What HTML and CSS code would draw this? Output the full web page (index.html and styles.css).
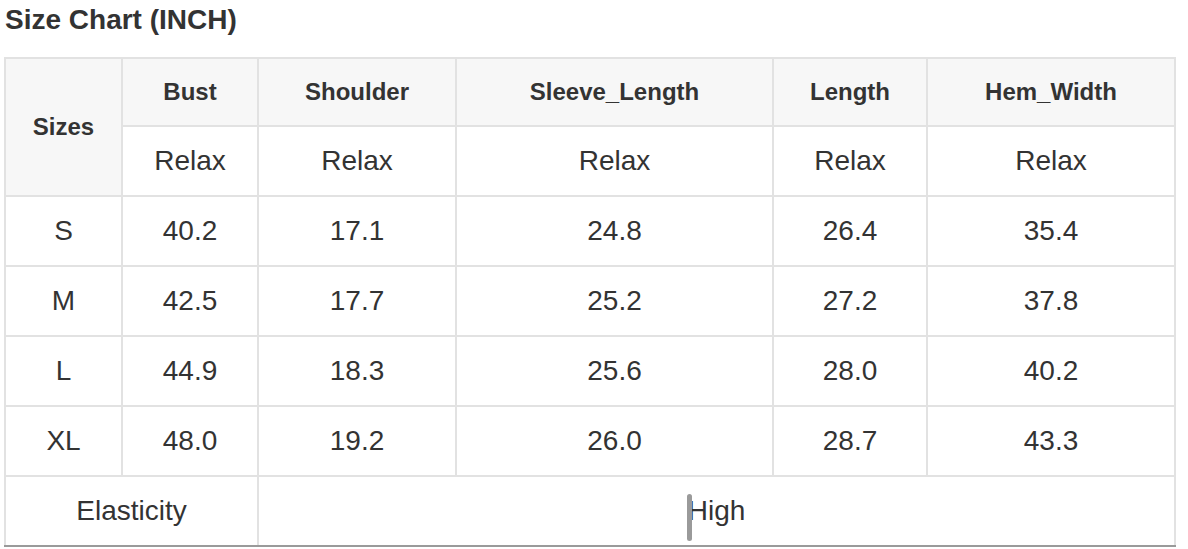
FILE: index.html
```html
<!DOCTYPE html>
<html>
<head>
<meta charset="utf-8">
<link rel="stylesheet" href="styles.css">
</head>
<body>
<h2 class="title">Size Chart (INCH)</h2>
<table class="chart">
  <colgroup>
    <col class="c1"><col class="c2"><col class="c3"><col class="c4"><col class="c5"><col class="c6">
  </colgroup>
  <tr class="head">
    <th rowspan="2" class="sizes">Sizes</th>
    <th>Bust</th><th>Shoulder</th><th>Sleeve_Length</th><th>Length</th><th>Hem_Width</th>
  </tr>
  <tr class="sub">
    <td>Relax</td><td>Relax</td><td>Relax</td><td>Relax</td><td>Relax</td>
  </tr>
  <tr><td>S</td><td>40.2</td><td>17.1</td><td>24.8</td><td>26.4</td><td>35.4</td></tr>
  <tr><td>M</td><td>42.5</td><td>17.7</td><td>25.2</td><td>27.2</td><td>37.8</td></tr>
  <tr><td>L</td><td>44.9</td><td>18.3</td><td>25.6</td><td>28.0</td><td>40.2</td></tr>
  <tr><td>XL</td><td>48.0</td><td>19.2</td><td>26.0</td><td>28.7</td><td>43.3</td></tr>
  <tr class="last"><td colspan="2">Elasticity</td><td colspan="4"><span class="high"><span class="caret"></span>High</span></td></tr>
</table>
</body>
</html>
```
FILE: styles.css
```css
html, body {
  margin: 0;
  padding: 0;
  background: #ffffff;
}
body {
  padding: 4px 0 0 4px;
  font-family: "Liberation Sans", Arial, sans-serif;
  color: #333333;
}
.title {
  margin: 0 0 21px 1px;
  font-size: 28px;
  line-height: 32px;
  font-weight: bold;
  color: #333333;
}
.chart {
  border-collapse: collapse;
  table-layout: fixed;
  width: 1170px;
}
.c1 { width: 117px; }
.c2 { width: 136px; }
.c3 { width: 198px; }
.c4 { width: 317px; }
.c5 { width: 154px; }
.c6 { width: 248px; }
.chart th, .chart td {
  border: 2px solid #e2e2e2;
  padding: 0;
  text-align: center;
  vertical-align: middle;
  font-size: 28px;
  font-weight: normal;
  color: #333333;
  height: 68px;
}
.chart th {
  background: #f7f7f7;
  font-weight: bold;
  font-size: 24px;
  height: 66px;
}
.chart .sizes {
  font-size: 24px;
}
.chart tr.last td {
  border-bottom: 2px solid #9a9a9a;
}
.high {
  position: relative;
  display: inline-block;
}
.caret {
  position: absolute;
  left: -1px;
  top: -1px;
  width: 5px;
  height: 47px;
  border-radius: 3px;
  background: #9a9a9a;
}
```
